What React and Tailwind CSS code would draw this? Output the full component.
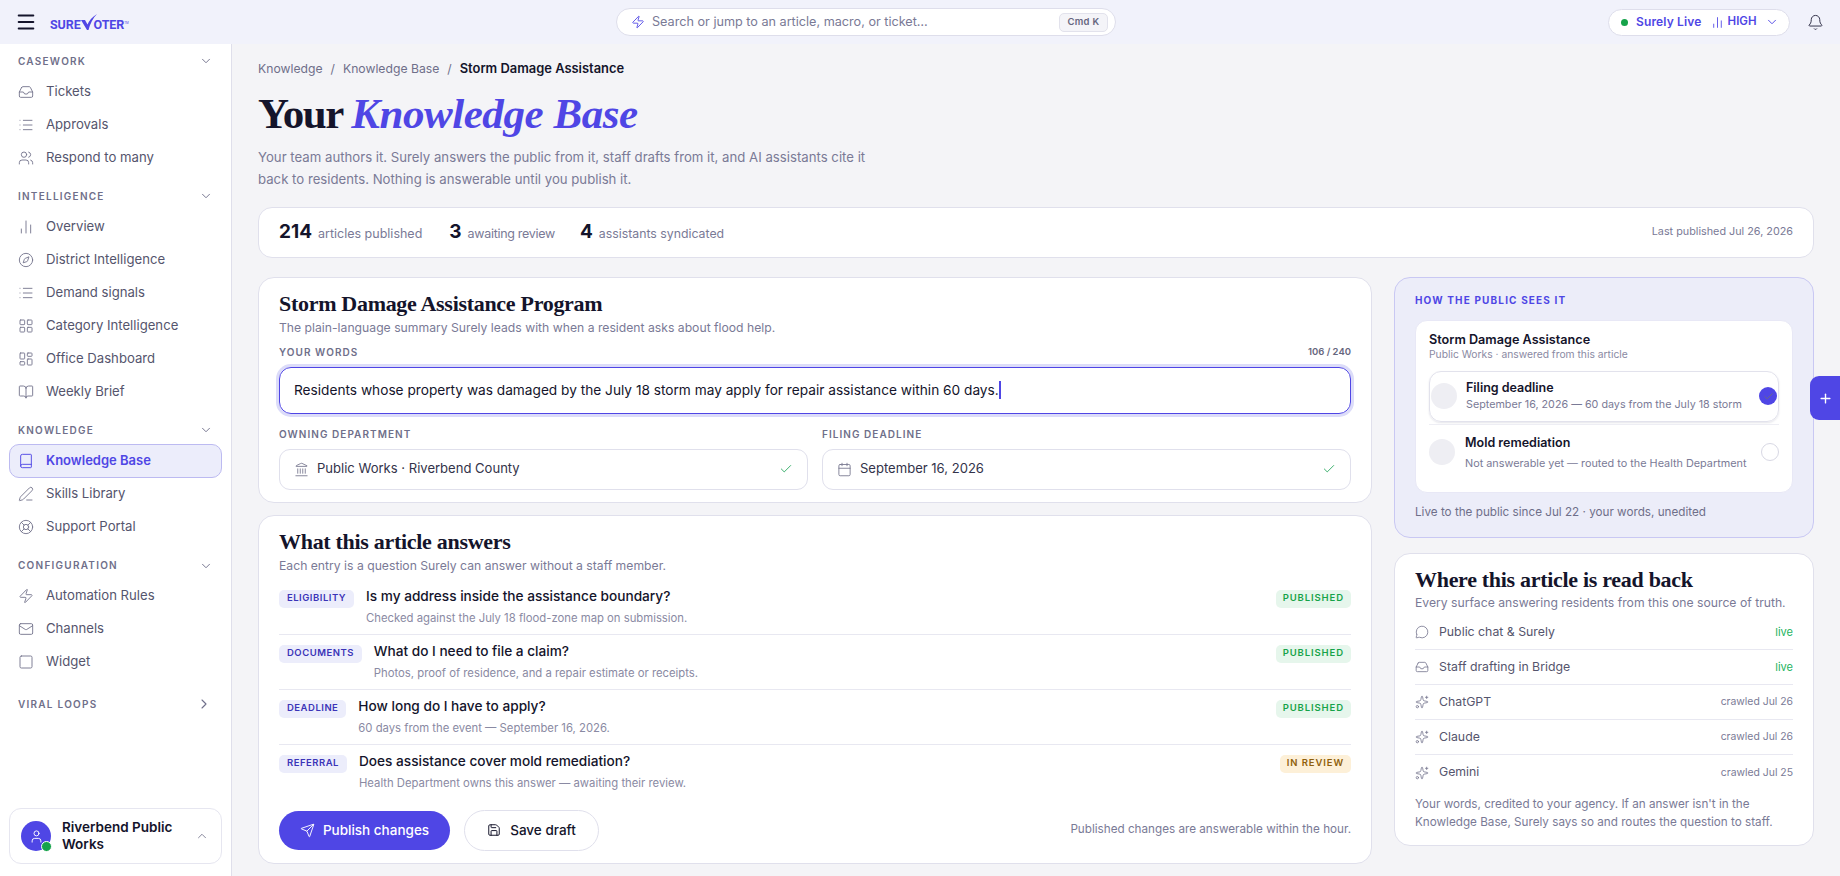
import React from "react";
import { Inbox, List, Users, ChartNoAxesColumn, Compass, LayoutGrid, LayoutDashboard, BookOpen, Book, PenLine, LifeBuoy, Zap, Mail, Square, ChevronDown, ChevronRight, ChevronUp, User, Bell, Landmark, Calendar, Check, Send, Save, MessageCircle, Sparkles, Plus, Menu } from "lucide-react";

const SERIF = "font-['Liberation_Serif',serif]";

const nav = [
  { label: "CASEWORK", items: [["Tickets", Inbox], ["Approvals", List], ["Respond to many", Users]] },
  { label: "INTELLIGENCE", items: [["Overview", ChartNoAxesColumn], ["District Intelligence", Compass], ["Demand signals", List], ["Category Intelligence", LayoutGrid], ["Office Dashboard", LayoutDashboard], ["Weekly Brief", BookOpen]] },
  { label: "KNOWLEDGE", items: [["Knowledge Base", Book, true], ["Skills Library", PenLine], ["Support Portal", LifeBuoy]] },
  { label: "CONFIGURATION", items: [["Automation Rules", Zap], ["Channels", Mail], ["Widget", Square]] },
];

const answers = [
  ["ELIGIBILITY", "Is my address inside the assistance boundary?", "Checked against the July 18 flood-zone map on submission.", "PUBLISHED"],
  ["DOCUMENTS", "What do I need to file a claim?", "Photos, proof of residence, and a repair estimate or receipts.", "PUBLISHED"],
  ["DEADLINE", "How long do I have to apply?", "60 days from the event — September 16, 2026.", "PUBLISHED"],
  ["REFERRAL", "Does assistance cover mold remediation?", "Health Department owns this answer — awaiting their review.", "IN REVIEW"],
];

const surfaces = [
  ["Public chat & Surely", MessageCircle, "live"],
  ["Staff drafting in Bridge", Inbox, "live"],
  ["ChatGPT", Sparkles, "crawled Jul 26"],
  ["Claude", Sparkles, "crawled Jul 26"],
  ["Gemini", Sparkles, "crawled Jul 25"],
];

function Logo() {
  return (
    <div className="relative flex items-end h-[18px] w-[72px] font-['Roboto',sans-serif] font-bold text-[#4f46e5] text-[12.5px] leading-[12px] tracking-[-0.1px]">
      <span>SURE</span>
      <svg width="17" height="18" viewBox="0 0 17 18" className="shrink-0 -ml-[1px] -mr-[3px]">
        <path d="M1 7 L7 17 L8.5 17 C10 11 13 5 17 1 C12 4 9 8 7.5 11.5 L5 7 Z" fill="#4f46e5" />
      </svg>
      <span>OTER</span>
      <span className="text-[3px] leading-[10px] self-start mt-[5px] font-normal">TM</span>
    </div>
  );
}

function Sidebar() {
  return (
    <aside className="w-[232px] shrink-0 h-[832px] bg-white border-r border-[#dfdfeb] flex flex-col px-[9px] pt-[7px] pb-3 font-['Inter',sans-serif]">
      {nav.map((s, i) => (
        <div key={s.label} className={i ? "mt-[12px]" : ""}>
          <div className="h-5 mb-[4px] flex items-center justify-between pl-[9px] pr-[9px]">
            <span className="text-[10px] font-semibold tracking-[1.25px] text-[#6f6f8a]">{s.label}</span>
            <ChevronDown size={14} strokeWidth={1.6} className="text-[#6f6f8a]" />
          </div>
          {s.items.map(([name, Icon, active]) => (
            <div key={name} className={`flex items-center gap-3 pl-2 border rounded-[10px] ${active ? "h-[34px] bg-[#ecedfb] border-[#bcbaf1] text-[#4f46e5] font-semibold -mb-[0.5px]" : "h-[33px] border-transparent text-[#55556d]"}`}>
              <Icon size={16} strokeWidth={1.4} className={`shrink-0 ${active ? "text-[#4f46e5]" : "text-[#77778f]"}`} />
              <span className={active ? "text-[13px]" : "text-[13.15px]"}>{name}</span>
            </div>
          ))}
        </div>
      ))}
      <div className="mt-[12.5px] h-[26px] flex items-center justify-between pl-[9px] pr-[9px]">
        <span className="text-[10px] font-semibold tracking-[1.25px] text-[#6f6f8a]">VIRAL LOOPS</span>
        <ChevronRight size={16} strokeWidth={1.6} className="text-[#6f6f8a] mr-[1px]" />
      </div>
      <div className="mt-auto h-[56px] rounded-[12px] border border-[#e6e6f0] flex items-center pl-[11px] pr-[12px]">
        <div className="relative w-[30px] h-[30px] rounded-full bg-[#4f46e5] flex items-center justify-center shrink-0">
          <User size={15} strokeWidth={1.5} className="text-white" />
          <span className="absolute -right-[1px] -bottom-[1px] w-[11px] h-[11px] rounded-full bg-[#16a34a] border border-white"></span>
        </div>
        <div className="ml-[11px] w-[118px] text-[13.5px] leading-[17px] font-semibold text-[#14142b]">Riverbend Public Works</div>
        <ChevronUp size={14} strokeWidth={1.5} className="ml-auto text-[#77778f]" />
      </div>
    </aside>
  );
}

function Header() {
  return (
    <header className="h-11 shrink-0 bg-[#f1f2fb] flex items-center font-['Inter',sans-serif] relative">
      <Menu size={22} strokeWidth={2.1} className="ml-[15px] text-[#14142b]" />
      <div className="ml-[13px]"><Logo /></div>
      <div className="ml-[494px] w-[500px] h-[28px] rounded-full bg-white border border-[#dedeeb] flex items-center pl-[14px] pr-[7px]">
        <Zap size={14} strokeWidth={1.5} className="text-[#4f46e5]" />
        <span className="ml-[7px] mt-[1px] text-[12.65px] text-[#7a7a96]">Search or jump to an article, macro, or ticket…</span>
        <span className="ml-auto w-[49px] h-[19px] rounded-[5px] bg-[#f4f4f8] border border-[#e2e2ec] flex items-center justify-center text-[9.5px] font-semibold text-[#66667e] tracking-[0.3px]">Cmd K</span>
      </div>
      <div className="ml-[492px] w-[182px] h-[27px] rounded-full bg-white border border-[#dedeeb] flex items-center pl-[12px] text-[#4f46e5] font-semibold">
        <span className="w-[7px] h-[7px] rounded-full bg-[#16a34a]"></span>
        <span className="ml-[8px] text-[12px] tracking-[0.15px]">Surely Live</span>
        <ChartNoAxesColumn size={13} strokeWidth={1.6} className="ml-[9px]" />
        <span className="ml-[4px] text-[11.5px]">HIGH</span>
        <ChevronDown size={14} strokeWidth={1.6} className="ml-[8px]" />
      </div>
      <Bell size={17} strokeWidth={1.4} className="ml-[17px] text-[#33334a]" />
    </header>
  );
}

function Field({ label, Icon, value }) {
  return (
    <div className="flex-1">
      <div className="h-[14px] flex items-center text-[10px] font-semibold tracking-[1.05px] text-[#6f6f8a]">{label}</div>
      <div className="mt-[7px] h-[41px] rounded-[11px] border border-[#e0e0ec] flex items-center pl-[14px] pr-[14px]">
        <Icon size={15} strokeWidth={1.4} className="text-[#77778f]" />
        <span className="ml-[8px] text-[13.05px] text-[#33334a]">{value}</span>
        <Check size={14} strokeWidth={1.5} className="ml-auto text-[#22a55a]" />
      </div>
    </div>
  );
}

function Main() {
  return (
    <main className="flex-1 min-w-0 bg-[#f4f4f7] px-[26px] pt-[15px] font-['Inter',sans-serif]">
      <div className="h-5 flex items-center text-[12.2px] text-[#6f6f8a]">
        <span>Knowledge</span><span className="mx-[8px]">/</span><span>Knowledge Base</span><span className="mx-[8px]">/</span>
        <span className="text-[12.9px] font-semibold text-[#14142b]">Storm Damage Assistance</span>
      </div>
      <h1 className={`${SERIF} mt-[9.5px] text-[43px] leading-[50px] font-bold tracking-[-1.5px] text-[#14142b]`}>
        Your <em className="text-[#4f46e5] tracking-[-0.45px]">Knowledge Base</em>
      </h1>
      <p className="mt-[7px] w-[620px] text-[13.2px] leading-[22px] text-[#7a7a96]">Your team authors it. Surely answers the public from it, staff drafts from it, and AI assistants cite it back to residents. Nothing is answerable until you publish it.</p>

      <div className="mt-[17px] h-[51px] bg-white border border-[#e0e0ec] rounded-[14px] flex items-center px-[20px]">
        <div className="flex items-baseline">
          <span className="text-[19px] font-bold text-[#14142b]">214</span>
          <span className="ml-[6px] text-[12.5px] text-[#7a7a96]">articles published</span>
          <span className="ml-[27px] text-[19px] font-bold text-[#14142b]">3</span>
          <span className="ml-[6px] text-[12.5px] tracking-[-0.3px] text-[#7a7a96]">awaiting review</span>
          <span className="ml-[25px] text-[19px] font-bold text-[#14142b]">4</span>
          <span className="ml-[6px] text-[12.3px] text-[#7a7a96]">assistants syndicated</span>
        </div>
        <span className="ml-auto text-[10.8px] text-[#7a7a96]">Last published Jul 26, 2026</span>
      </div>

      <div className="mt-[19px] grid grid-cols-[1fr_420px] gap-[22px] items-start">
        <div className="flex flex-col gap-3">
          <section className="h-[226px] bg-white border border-[#e0e0ec] rounded-[16px] px-[20px] pt-[12px]">
            <h2 className={`${SERIF} text-[22px] leading-[28px] font-bold tracking-[-0.3px] text-[#14142b]`}>Storm Damage Assistance Program</h2>
            <p className="mt-[1px] text-[12.2px] leading-[18px] text-[#7a7a96]">The plain-language summary Surely leads with when a resident asks about flood help.</p>
            <div className="mt-[9px] h-[14px] flex items-center justify-between">
              <span className="text-[10px] font-semibold tracking-[1.05px] text-[#6f6f8a]">YOUR WORDS</span>
              <span className="text-[9.5px] font-semibold text-[#66667e]">106 / 240</span>
            </div>
            <div className="mt-[7px] h-[47px] rounded-[12px] border border-[#4f46e5] ring-[3px] ring-[#dcdcf9] flex items-center pl-[14px]">
              <span className="text-[13.68px] text-[#14142b]">Residents whose property was damaged by the July 18 storm may apply for repair assistance within 60 days.</span>
              <span className="w-[2px] h-[18px] bg-[#4f46e5]"></span>
            </div>
            <div className="mt-[14px] flex gap-[14px]">
              <Field label="OWNING DEPARTMENT" Icon={Landmark} value="Public Works · Riverbend County" />
              <Field label="FILING DEADLINE" Icon={Calendar} value="September 16, 2026" />
            </div>
          </section>

          <section className="h-[349px] bg-white border border-[#e0e0ec] rounded-[16px] px-[20px] pt-[12px]">
            <h2 className={`${SERIF} text-[22px] leading-[28px] font-bold tracking-[-0.3px] text-[#14142b]`}>What this article answers</h2>
            <p className="mt-[1px] text-[12.2px] leading-[18px] text-[#7a7a96]">Each entry is a question Surely can answer without a staff member.</p>
            <div className="mt-[5px]">
              {answers.map(([tag, q, a, status], i) => (
                <div key={tag} className={`h-[55px] flex items-start pt-[9.5px] ${i < 3 ? "border-b border-[#e8e8f1]" : ""}`}>
                  <span className="mt-[0.5px] h-[18px] px-[8px] rounded-[5px] bg-[#ecedfb] text-[#3b34b8] text-[9.5px] font-semibold tracking-[0.5px] flex items-center shrink-0">{tag}</span>
                  <div className="ml-[12px] min-w-0 -mt-[1px]">
                    <div className="text-[13.65px] leading-[16px] font-medium text-[#14142b]">{q}</div>
                    <div className="mt-[7px] text-[11.3px] leading-[14px] text-[#8a8aa3]">{a}</div>
                  </div>
                  <span className={`mt-[0.5px] ml-auto h-[18px] px-[7px] rounded-[5px] text-[9.5px] font-semibold tracking-[0.9px] flex items-center shrink-0 ${status === "PUBLISHED" ? "bg-[#e6f6ec] text-[#16a34a]" : "bg-[#fdf0d8] text-[#8f5f0b]"}`}>{status}</span>
                </div>
              ))}
            </div>
            <div className="mt-[10px] flex items-center">
              <button className="h-[39px] w-[171px] rounded-full bg-[#4f46e5] text-white text-[13.5px] font-medium flex items-center justify-center gap-[8px]">
                <Send size={15} strokeWidth={1.5} />Publish changes
              </button>
              <button className="ml-[14px] h-[41px] w-[135px] rounded-full bg-white border border-[#e0e0ec] text-[#14142b] text-[13.5px] font-medium flex items-center justify-center gap-[9px]">
                <Save size={14} strokeWidth={1.7} />Save draft
              </button>
              <span className="ml-auto text-[11.7px] text-[#7a7a96]">Published changes are answerable within the hour.</span>
            </div>
          </section>
        </div>

        <div className="flex flex-col gap-[15px]">
          <section className="h-[261px] bg-[#ecedf9] border border-[#c9c8f3] rounded-[16px] px-[20px] pt-[15px]">
            <div className="h-4 flex items-center text-[10px] font-bold tracking-[1.15px] text-[#4f46e5]">HOW THE PUBLIC SEES IT</div>
            <div className="mt-[11px] h-[173px] bg-white border border-[#e8e8f6] rounded-[12px] px-[13px] pt-[12px]">
              <div className="text-[12.65px] leading-[14.5px] font-semibold text-[#14142b]">Storm Damage Assistance</div>
              <div className="text-[10.3px] leading-[14px] text-[#8a8aa3]">Public Works · answered from this article</div>
              <div className="mt-[9.5px] h-[51px] rounded-[12px] border border-[#e2e2ec] shadow-[0_1px_2px_rgba(40,40,80,0.12)] flex items-center pl-[1px] pr-[1px]">
                <span className="w-[26px] h-[26px] rounded-full bg-[#eeeef3] shrink-0"></span>
                <div className="ml-[9px]">
                  <div className="text-[12.5px] leading-[17px] font-semibold text-[#14142b]">Filing deadline</div>
                  <div className="text-[10.75px] leading-[17px] whitespace-nowrap text-[#7a7a96]">September 16, 2026 — 60 days from the July 18 storm</div>
                </div>
                <span className="ml-auto w-[18px] h-[18px] rounded-full bg-[#4f46e5] flex items-center justify-center shrink-0">
                  <Check size={11} strokeWidth={2} className="text-[#6b6b80]" />
                </span>
              </div>
              <div className="mt-[2px] h-[55px] border-t border-[#eeeef4] flex items-center">
                <span className="w-[26px] h-[26px] rounded-full bg-[#eeeef3] shrink-0"></span>
                <div className="ml-[10px] pt-[2px]">
                  <div className="text-[12.5px] leading-[17px] font-semibold text-[#14142b]">Mold remediation</div>
                  <div className="mt-[4px] text-[10.85px] leading-[17px] whitespace-nowrap text-[#7a7a96]">Not answerable yet — routed to the Health Department</div>
                </div>
                <span className="ml-auto w-[18px] h-[18px] rounded-full border border-[#d8d8e4] bg-white shrink-0"></span>
              </div>
            </div>
            <div className="mt-[10px] text-[11.7px] leading-[18px] text-[#6f6f8a]">Live to the public since Jul 22 · your words, unedited</div>
          </section>

          <section className="h-[293px] bg-white border border-[#e0e0ec] rounded-[16px] px-[20px] pt-[12px]">
            <h2 className={`${SERIF} text-[22px] leading-[28px] font-bold tracking-[-0.3px] text-[#14142b]`}>Where this article is read back</h2>
            <p className="text-[12.2px] leading-[18px] text-[#7a7a96]">Every surface answering residents from this one source of truth.</p>
            <div className="mt-[3.5px]">
              {surfaces.map(([name, Icon, note], i) => (
                <div key={name} className={`h-[35px] flex items-center ${i < 4 ? "border-b border-[#e8e8f1]" : ""}`}>
                  <Icon size={14} strokeWidth={1.4} className="text-[#77778f] shrink-0" />
                  <span className="ml-[10px] text-[12.3px] text-[#55556d]">{name}</span>
                  <span className={`ml-auto ${note === "live" ? "text-[11px] text-[#22b35e]" : "text-[10.4px] text-[#7a7a96]"}`}>{note}</span>
                </div>
              ))}
            </div>
            <p className="mt-[5px] text-[11.7px] leading-[18px] text-[#7a7a96]">Your words, credited to your agency. If an answer isn't in the Knowledge Base, Surely says so and routes the question to staff.</p>
          </section>
        </div>
      </div>
    </main>
  );
}

export default function App() {
  return (
    <div className="relative w-[1840px] h-[876px] overflow-hidden flex flex-col bg-[#f4f4f7]">
      <Header />
      <div className="flex flex-1 min-h-0">
        <Sidebar />
        <Main />
      </div>
      <button className="absolute right-0 top-[376px] w-[30px] h-[44px] rounded-l-[9px] bg-[#4f46e5] text-white flex items-center justify-center">
        <Plus size={15} strokeWidth={2.2} />
      </button>
    </div>
  );
}
